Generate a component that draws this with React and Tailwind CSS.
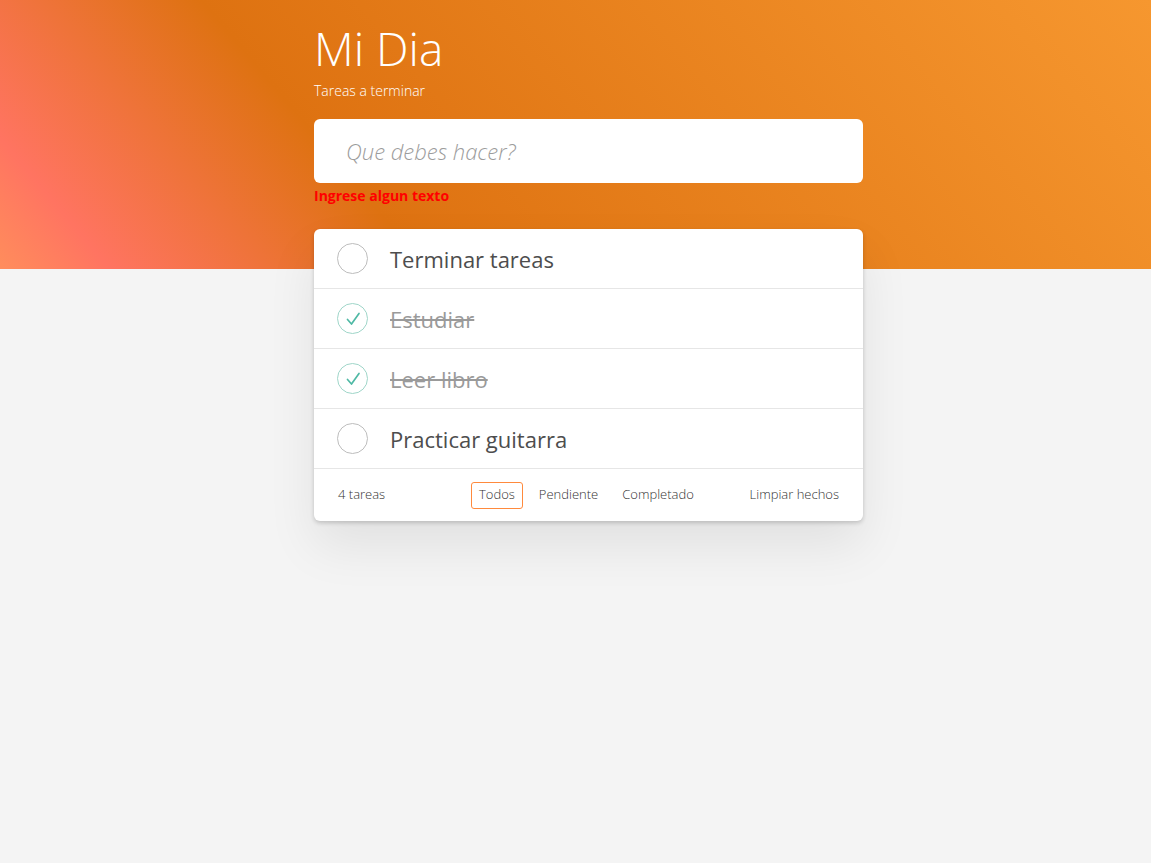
import React, { useState } from 'react';

const initialTodos = [
  { id: 1, text: 'Terminar tareas', done: false },
  { id: 2, text: 'Estudiar', done: true },
  { id: 3, text: 'Leer libro', done: true },
  { id: 4, text: 'Practicar guitarra', done: false },
];

const CheckCircle = ({ done }) => (
  <span
    className={`flex h-[31px] w-[31px] shrink-0 items-center justify-center rounded-full border ${
      done ? 'border-[#9fd6c9]' : 'border-[#bdbdbd]'
    }`}
  >
    {done && (
      <svg width="22" height="22" viewBox="0 0 22 22" fill="none">
        <path d="M5.5 11.5 L9.5 16 L17 5.5" stroke="#4fb9a5" strokeWidth="1.7" strokeLinecap="round" strokeLinejoin="round" />
      </svg>
    )}
  </span>
);

const App = () => {
  const [todos] = useState(initialTodos);
  const [filter, setFilter] = useState('Todos');

  return (
    <div className="min-h-[863px] bg-[#f4f4f4] font-['Open_Sans','Noto_Sans',sans-serif]">
      <div className="h-[269px] bg-[linear-gradient(50deg,#ff8d5c_0%,#ff7461_8%,#de7211_31%,#f6972f_100%)]">
        <div className="mx-auto w-[575px] pl-[26px]">
          <div className="w-[549px] pt-[22px]">
            <h1 className="text-[46px] font-light leading-[52px] text-white">Mi Dia</h1>
            <p className="mt-[8px] text-[14px] font-light leading-[18px] text-white">Tareas a terminar</p>
            <div className="mt-[19px] flex h-[64px] items-center rounded-[6px] bg-white px-[32px]">
              <input
                className="w-full bg-transparent text-[22px] italic text-[#555] outline-none placeholder:text-[#9c9c9c] placeholder:font-light"
                placeholder="Que debes hacer?"
              />
            </div>
            <p className="mt-[3px] text-[14px] font-bold leading-[20px] text-[#ff0000]">Ingrese algun texto</p>
          </div>
        </div>
      </div>

      <div className="mx-auto -mt-[40px] w-[575px] pl-[26px]">
        <div className="w-[549px] rounded-[6px] bg-white shadow-[0_2px_4px_rgba(0,0,0,0.18),0_25px_50px_rgba(0,0,0,0.08)]">
          {todos.map((t) => (
            <div key={t.id} className="flex h-[60px] items-center gap-[22px] border-b border-[#e6e6e6] px-[23px]">
              <CheckCircle done={t.done} />
              <span
                className={`text-[22px] leading-none ${
                  t.done ? 'text-[#9a9a9a] line-through decoration-[#9a9a9a]' : 'text-[#4d4d4d]'
                }`}
              >
                {t.text}
              </span>
            </div>
          ))}
          <div className="flex h-[52px] items-center px-[24px] text-[13px] font-light text-[#333]">
            <span className="w-[133px]">4 tareas</span>
            <div className="flex items-center gap-[8px]">
              {['Todos', 'Pendiente', 'Completado'].map((f) => (
                <button
                  key={f}
                  onClick={() => setFilter(f)}
                  className={`h-[27px] rounded-[3px] border px-[7px] ${
                    filter === f ? 'border-[#ff8a3d]' : 'border-transparent'
                  }`}
                >
                  {f}
                </button>
              ))}
            </div>
            <button className="ml-auto">Limpiar hechos</button>
          </div>
        </div>
      </div>
    </div>
  );
};

export default App;
